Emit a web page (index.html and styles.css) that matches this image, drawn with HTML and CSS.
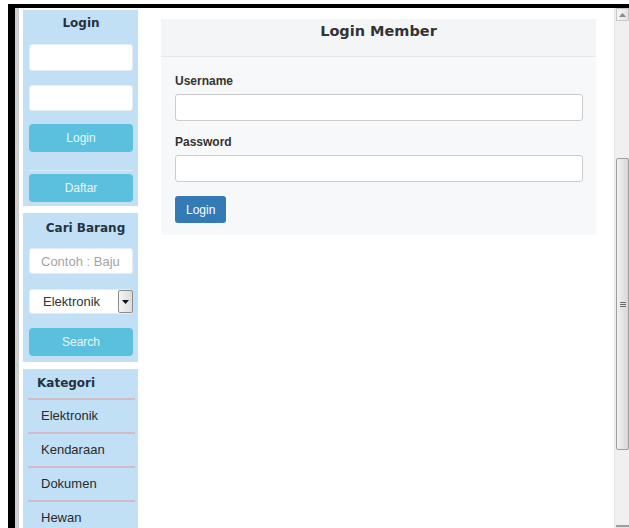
FILE: index.html
```html
<!DOCTYPE html>
<html lang="id">
<head>
<meta charset="utf-8">
<title>Login Member</title>
<link rel="stylesheet" href="styles.css">
</head>
<body>
<div class="screen">
  <div class="window">
    <div class="gutter"></div>
    <div class="viewport">
      <aside class="sidebar">
        <section class="panel panel-login">
          <h3 class="panel-title">Login</h3>
          <input class="side-input" type="text">
          <input class="side-input gap-sm" type="password">
          <button class="side-btn btn-login">Login</button>
          <hr class="side-sep">
          <button class="side-btn">Daftar</button>
        </section>

        <section class="panel panel-search">
          <h3 class="panel-title">Cari Barang</h3>
          <input class="side-input search-input" type="text" placeholder="Contoh : Baju">
          <div class="select-wrap">
            <select class="side-select">
              <option>Elektronik</option>
              <option>Kendaraan</option>
              <option>Dokumen</option>
              <option>Hewan</option>
            </select>
            <span class="select-arrow">
              <svg width="7" height="4" viewBox="0 0 7 4"><path d="M0 0h7L3.5 4z" fill="#111"/></svg>
            </span>
          </div>
          <button class="side-btn">Search</button>
        </section>

        <section class="panel panel-cat">
          <h3 class="panel-title title-left">Kategori</h3>
          <ul class="cat-list">
            <li>Elektronik</li>
            <li>Kendaraan</li>
            <li>Dokumen</li>
            <li>Hewan</li>
          </ul>
        </section>
      </aside>

      <main class="main">
        <div class="card">
          <div class="card-head">
            <h2 class="card-title">Login Member</h2>
          </div>
          <form class="card-body">
            <label class="field-label">Username</label>
            <input class="field-input" type="text">
            <label class="field-label">Password</label>
            <input class="field-input" type="password">
            <button type="button" class="btn-primary">Login</button>
          </form>
        </div>
      </main>
    </div>

    <div class="scrollbar">
      <div class="sb-up">
        <svg width="7" height="4" viewBox="0 0 7 4"><path d="M0 4h7L3.5 0z" fill="#8a8a8a"/></svg>
      </div>
      <div class="sb-track">
        <div class="sb-thumb">
          <span class="sb-grip"></span>
        </div>
      </div>
      <div class="sb-down"></div>
    </div>
  </div>
</div>
</body>
</html>
```

FILE: styles.css
```css
* {
  box-sizing: border-box;
}

html, body {
  margin: 0;
  padding: 0;
  background: #fff;
}

body {
  font-family: "Liberation Sans", Arial, sans-serif;
  color: #333;
}

.screen {
  width: 629px;
  height: 528px;
  padding: 4px 0 0 8px;
  display: flex;
  flex-direction: column;
  overflow: hidden;
}

.window {
  flex: 1;
  display: flex;
  border-top: 4px solid #000;
  border-left: 7px solid #000;
  min-height: 0;
}

.gutter {
  width: 4px;
  background: #cfcfcf;
}

.viewport {
  flex: 1;
  display: flex;
  align-items: flex-start;
  overflow: hidden;
}

/* ---- sidebar ---- */
.sidebar {
  width: 115px;
  margin: 2px 0 0 4px;
  display: flex;
  flex-direction: column;
  gap: 7px;
}

.panel {
  background: #c1e0f5;
  padding: 0 5px 4px 6px;
  display: flex;
  flex-direction: column;
}

.panel-title {
  margin: 0;
  font-family: "DejaVu Sans", Verdana, sans-serif;
  font-weight: bold;
  font-size: 12px;
  line-height: 16px;
  color: #26333f;
  text-align: center;
  padding: 5px 0 13px;
}

.title-left {
  text-align: left;
  padding: 6px 0 7px 8px;
}

.side-input,
.side-select {
  display: block;
  width: 100%;
  height: 27px;
  border: 1px solid #e3edf3;
  border-radius: 3px;
  background: #fff;
  font-family: "Liberation Sans", Arial, sans-serif;
  font-size: 13px;
  color: #555;
  padding: 0 12px;
  margin: 0;
  outline: none;
}

.side-input::placeholder {
  color: #a4a4a4;
}

.gap-sm {
  margin-top: 14px;
  height: 26px;
}

.side-btn {
  display: block;
  width: 100%;
  height: 28px;
  border: none;
  border-radius: 4px;
  background: #5bc0de;
  color: #e6f6fb;
  font-family: "Liberation Sans", Arial, sans-serif;
  font-size: 12px;
  padding: 0;
}

.btn-login {
  margin-top: 13px;
}

.side-sep {
  width: 100%;
  margin: 18px 0 3px;
  border: none;
  border-top: 1px solid #dcecf7;
}

.panel-search {
  padding-bottom: 6px;
}

.panel-search .panel-title {
  padding: 7px 0 12px 9px;
}

.panel-search .search-input {
  height: 26px;
  padding: 0 2px 0 11px;
}

.select-wrap {
  position: relative;
  margin: 15px 0 14px;
}

.side-select {
  height: 25px;
  appearance: none;
  -webkit-appearance: none;
  padding-left: 13px;
  color: #333;
}

.select-arrow {
  position: absolute;
  top: 1px;
  right: 0;
  width: 15px;
  height: 23px;
  border: 1px solid #8c8c8c;
  border-radius: 2px;
  background: linear-gradient(to right, #f4f4f4, #dcdcdc);
  display: flex;
  align-items: center;
  justify-content: center;
}

.panel-cat {
  padding: 0 3px 0 0;
}

.panel-cat .title-left {
  padding: 6px 0 7px 14px;
}

.cat-list {
  list-style: none;
  margin: 0 0 0 5px;
  padding: 0;
}

.cat-list li {
  border-top: 2px solid #d2bcc6;
  padding: 8px 0 8px 13px;
  font-size: 13px;
  line-height: 16px;
  color: #2a2a2a;
}

/* ---- main ---- */
.main {
  margin: 11px 0 0 23px;
  width: 435px;
}

.card {
  background: #f7f8fa;
}

.card-head {
  background: #f4f5f7;
  border-bottom: 1px solid #e6e8eb;
  padding: 3px 0 16px;
}

.card-title {
  margin: 0;
  font-family: "DejaVu Sans", Verdana, sans-serif;
  font-weight: bold;
  font-size: 14.5px;
  line-height: 18px;
  color: #333;
  text-align: center;
}

.card-body {
  margin: 0;
  padding: 17px 13px 12px 14px;
  display: flex;
  flex-direction: column;
  align-items: flex-start;
}

.field-label {
  font-size: 12px;
  line-height: 15px;
  font-weight: bold;
  color: #333;
  margin-bottom: 5px;
}

.field-input {
  display: block;
  width: 100%;
  height: 27px;
  border: 1px solid #cccccc;
  border-radius: 3px;
  background: #fff;
  margin: 0 0 14px;
  outline: none;
}

.btn-primary {
  height: 27px;
  padding: 0 11px;
  border: none;
  border-radius: 3px;
  background: #337ab7;
  color: #fff;
  font-family: "Liberation Sans", Arial, sans-serif;
  font-size: 12px;
}

/* ---- window scrollbar ---- */
.scrollbar {
  width: 15px;
  background: #f0f0f0;
  border-left: 1px solid #e4e4e4;
  display: flex;
  flex-direction: column;
}

.sb-up {
  height: 13px;
  margin-left: 1px;
  border: 1px solid #c8c8c8;
  background: linear-gradient(to right, #f6f6f6, #e2e2e2);
  display: flex;
  align-items: center;
  justify-content: center;
}

.sb-track {
  flex: 1;
  padding: 137px 0 0 1px;
}

.sb-thumb {
  height: 292px;
  border: 1px solid #9e9e9e;
  border-radius: 2px;
  background: linear-gradient(to right, #f2f2f2, #d6d6d6);
  display: flex;
  align-items: center;
  justify-content: center;
}

.sb-grip {
  width: 6px;
  height: 5px;
  background: repeating-linear-gradient(to bottom, #6a6a6a 0 1px, transparent 1px 2px);
}

.sb-down {
  height: 3px;
  margin-left: 1px;
  border-top: 2px solid #9e9e9e;
  background: #e4e4e4;
}
```
